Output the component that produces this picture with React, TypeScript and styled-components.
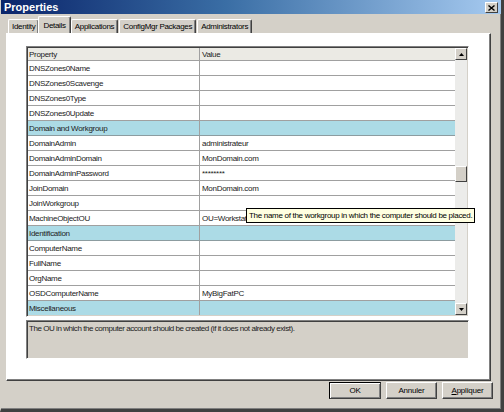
import styled, { createGlobalStyle } from "styled-components";

const GlobalStyle = createGlobalStyle`
  html, body { margin: 0; padding: 0; background: #d4d0c8; }
  body { font-family: "Liberation Sans", Arial, sans-serif; }
`

const Window = styled.div`
  width: 504px;
  height: 412px;
  box-sizing: border-box;
  background: #d4d0c8;
  border-left: 1px solid #d4d0c8;
  border-right: 3px solid #404040;
  border-bottom: 3px solid #404040;
  box-shadow: inset -1px -1px 0 #808080;
  display: flex;
  flex-direction: column;
  overflow: hidden;
`

const TitleBar = styled.div`
  height: 14px;
  flex: none;
  display: flex;
  align-items: center;
  justify-content: space-between;
  padding: 0 3px 0 3px;
  background: linear-gradient(to right, #0a246a 0%, #3a6ea5 45%, #a6caf0 100%);
  color: #fff;
  font-weight: bold;
  font-size: 11px;
`

const CloseButton = styled.div`
  width: 11px;
  height: 9px;
  margin-top: 1px;
  background: #d4d0c8;
  border-top: 1px solid #fff;
  border-left: 1px solid #fff;
  border-right: 1px solid #404040;
  border-bottom: 1px solid #404040;
  display: flex;
  align-items: center;
  justify-content: center;
`

const TabStrip = styled.div`
  display: flex;
  align-items: flex-end;
  height: 17px;
  margin-top: 2px;
  padding-left: 6px;
  flex: none;
`

const Tab = styled.div<{ $active?: boolean }>`
  height: ${p => (p.$active ? 17 : 14)}px;
  box-sizing: border-box;
  padding: 0 ${p => (p.$active ? 4 : 3)}px;
  margin-left: ${p => (p.$active ? -1 : 1)}px;
  margin-right: ${p => (p.$active ? -1 : 0)}px;
  display: flex;
  align-items: center;
  font-size: 8px;
  letter-spacing: -0.3px;
  color: #000;
  background: #d4d0c8;
  border-top: 1px solid #fff;
  border-left: 1px solid #fff;
  border-right: 1px solid #404040;
  box-shadow: inset -1px 0 0 #808080;
  border-radius: 2px 2px 0 0;
  position: relative;
  z-index: ${p => (p.$active ? 2 : 1)};
`

const Panel = styled.div`
  margin: 0 10px 0 5px;
  height: 348px;
  flex: none;
  box-sizing: border-box;
  background: #fff;
  border-top: 1px solid #fff;
  border-left: 1px solid #fff;
  border-right: 1px solid #404040;
  border-bottom: 1px solid #404040;
  box-shadow: inset -1px -1px 0 #808080;
  padding: 12px 0 0 19px;
  display: flex;
  flex-direction: column;
`

const Grid = styled.div`
  width: 443px;
  height: 271px;
  box-sizing: border-box;
  border-top: 1px solid #808080;
  border-left: 1px solid #808080;
  border-right: 1px solid #fff;
  border-bottom: 1px solid #fff;
  box-shadow: inset 1px 1px 0 #404040, inset -1px -1px 0 #d4d0c8;
  padding: 1px;
  display: flex;
  position: relative;
`

const Rows = styled.div`
  flex: 1;
  overflow: hidden;
`

const Row = styled.div<{ $kind?: "head" | "cat" }>`
  display: grid;
  grid-template-columns: 171px 1fr;
  height: ${p => (p.$kind === "head" ? 13 : 15)}px;
  box-sizing: border-box;
  border-bottom: 1px solid ${p => (p.$kind === "cat" ? "#8c9ca0" : "#a0a0a0")};
  background: ${p => (p.$kind === "cat" ? "#acdbe6" : p.$kind === "head" ? "#ebeae4" : "#fff")};
  font-size: 8px;
  letter-spacing: -0.3px;
  color: #222;
`

const Cell = styled.div`
  padding-left: 1px;
  display: flex;
  align-items: center;
  white-space: nowrap;
  overflow: hidden;
  & + & { border-left: 1px solid #a0a0a0; padding-left: 2px; }
`

const ScrollBar = styled.div`
  width: 12px;
  flex: none;
  display: flex;
  flex-direction: column;
  background: #ececea;
`

const ScrollButton = styled.div`
  height: 12px;
  box-sizing: border-box;
  background: #d4d0c8;
  border-top: 1px solid #fff;
  border-left: 1px solid #fff;
  border-right: 1px solid #404040;
  border-bottom: 1px solid #404040;
  display: flex;
  align-items: center;
  justify-content: center;
`

const Track = styled.div`
  flex: 1;
  padding-top: 106px;
`

const Thumb = styled.div`
  height: 16px;
  box-sizing: border-box;
  background: #d4d0c8;
  border-top: 1px solid #fff;
  border-left: 1px solid #fff;
  border-right: 1px solid #404040;
  border-bottom: 1px solid #404040;
`

const Tooltip = styled.div`
  position: absolute;
  left: 219px;
  top: 161px;
  padding: 0 2px;
  height: 13px;
  display: flex;
  align-items: center;
  background: #ffffe1;
  border: 1px solid #000;
  font-size: 8px;
  letter-spacing: -0.3px;
  color: #000;
  white-space: nowrap;
`

const Description = styled.div`
  width: 443px;
  height: 39px;
  margin-top: 3px;
  box-sizing: border-box;
  background: #d4d0c8;
  border-top: 1px solid #808080;
  border-left: 1px solid #808080;
  border-right: 1px solid #fff;
  border-bottom: 1px solid #fff;
  box-shadow: inset 1px 1px 0 #404040;
  padding: 3px 2px;
  font-size: 8px;
  letter-spacing: -0.45px;
  color: #222;
`

const Footer = styled.div`
  display: flex;
  justify-content: flex-end;
  gap: 5px;
  padding: 1px 8px 0 0;
`

const Button = styled.div<{ $w: number; $default?: boolean }>`
  width: ${p => p.$w}px;
  height: 17px;
  box-sizing: border-box;
  background: #d4d0c8;
  border-top: 1px solid ${p => (p.$default ? "#000" : "#fff")};
  border-left: 1px solid ${p => (p.$default ? "#000" : "#fff")};
  border-right: 1px solid #404040;
  border-bottom: 1px solid #404040;
  box-shadow: ${p => (p.$default ? "inset 1px 1px 0 #fff, inset -1px -1px 0 #808080" : "inset -1px -1px 0 #808080")};
  display: flex;
  align-items: center;
  justify-content: center;
  font-size: 8px;
  letter-spacing: -0.2px;
  color: #000;
  u { text-decoration: underline; }
`

type Item = { name: string; value?: string; cat?: boolean };

const items: Item[] = [
  { name: "DNSZones0Name" },
  { name: "DNSZones0Scavenge" },
  { name: "DNSZones0Type" },
  { name: "DNSZones0Update" },
  { name: "Domain and Workgroup", cat: true },
  { name: "DomainAdmin", value: "administrateur" },
  { name: "DomainAdminDomain", value: "MonDomain.com" },
  { name: "DomainAdminPassword", value: "********" },
  { name: "JoinDomain", value: "MonDomain.com" },
  { name: "JoinWorkgroup" },
  { name: "MachineObjectOU", value: "OU=Workstations,DC=MonDomain,DC=com" },
  { name: "Identification", cat: true },
  { name: "ComputerName" },
  { name: "FullName" },
  { name: "OrgName" },
  { name: "OSDComputerName", value: "MyBigFatPC" },
  { name: "Miscellaneous", cat: true },
];

const tabs = ["Identity", "Details", "Applications", "ConfigMgr Packages", "Administrators"];

const Arrow = ({ up }: { up?: boolean }) => (
  <svg width="5" height="3" viewBox="0 0 5 3">
    <path d={up ? "M2.5 0 L5 3 L0 3 Z" : "M0 0 L5 0 L2.5 3 Z"} fill="#000" />
  </svg>
);

export default function App() {
  return (
    <>
      <GlobalStyle />
      <Window>
        <TitleBar>
          <span>Properties</span>
          <CloseButton>
            <svg width="7" height="6" viewBox="0 0 7 6">
              <path d="M0.5 0.5 L6.5 5.5 M6.5 0.5 L0.5 5.5" stroke="#000" strokeWidth="1.4" />
            </svg>
          </CloseButton>
        </TitleBar>
        <TabStrip>
          {tabs.map(t => (
            <Tab key={t} $active={t === "Details"}>{t}</Tab>
          ))}
        </TabStrip>
        <Panel>
          <Grid>
            <Rows>
              <Row $kind="head">
                <Cell>Property</Cell>
                <Cell>Value</Cell>
              </Row>
              {items.map(it => (
                <Row key={it.name} $kind={it.cat ? "cat" : undefined}>
                  <Cell>{it.name}</Cell>
                  <Cell>{it.value ?? ""}</Cell>
                </Row>
              ))}
            </Rows>
            <ScrollBar>
              <ScrollButton><Arrow up /></ScrollButton>
              <Track><Thumb /></Track>
              <ScrollButton><Arrow /></ScrollButton>
            </ScrollBar>
            <Tooltip>The name of the workgroup in which the computer should be placed.</Tooltip>
          </Grid>
          <Description>The OU in which the computer account should be created (if it does not already exist).</Description>
        </Panel>
        <Footer>
          <Button $w={52} $default>OK</Button>
          <Button $w={51}>Annuler</Button>
          <Button $w={51}><span><u>A</u>ppliquer</span></Button>
        </Footer>
      </Window>
    </>
  );
}
